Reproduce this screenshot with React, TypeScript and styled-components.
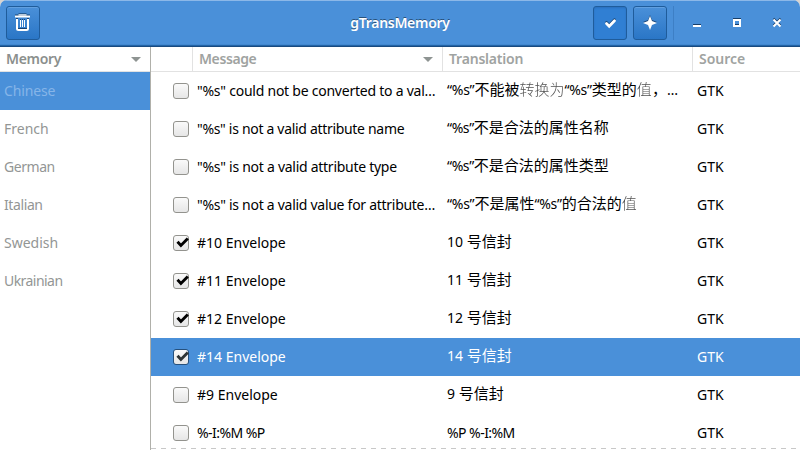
import React from "react";
import styled, { createGlobalStyle, css } from "styled-components";

const Global = createGlobalStyle`
  * { box-sizing: border-box; }
  body { margin: 0; background: #d8d4d0; overflow: hidden; }
`;

const Window = styled.div`
  width: 800px;
  height: 450px;
  display: flex;
  flex-direction: column;
  overflow: hidden;
  background: #fff;
  border-radius: 7px 7px 0 0;
  font: 14px/20px "Noto Sans", "Noto Sans CJK SC", sans-serif;
  color: #000;
`;

const HeaderBar = styled.header`
  height: 47px;
  flex: none;
  display: grid;
  grid-template-columns: 1fr auto 1fr;
  align-items: start;
  padding: 5px 6px 0;
  background: #4a90d9;
  border-top: 1px solid #8cb8e8;
  border-bottom: 1px solid #184a80;
  box-shadow: inset 0 -1px #2363a5, inset 0 -2px #4288d0;
`;

const Title = styled.h1`
  margin: 0;
  font-size: 14px;
  line-height: 34px;
  font-weight: 600;
  color: #fff;
  text-shadow: 0 -1px rgba(0, 0, 0, 0.45);
`;

const Controls = styled.div`
  display: flex;
  justify-content: flex-end;
  align-items: center;
  margin-right: 9px;
`;

const ToolButton = styled.button<{ $pressed?: boolean }>`
  width: 34px;
  height: 34px;
  padding: 0;
  display: grid;
  place-items: center;
  border: 1px solid #1f5c9b;
  border-radius: 3px;
  background: ${(p) => (p.$pressed ? "#307fd3" : "linear-gradient(#4a90d9, #2a76c6)")};
  box-shadow: ${(p) => (p.$pressed ? "inset 0 1px 2px #2a70bd" : "inset 0 1px #62a0e0")};
  & + & { margin-left: 6px; }
  svg { filter: drop-shadow(0 -1px 0 rgba(10, 40, 75, 0.7)); }
`;

const Divider = styled.div`
  width: 1px;
  height: 34px;
  margin: 0 15px 0 6px;
  background: #3d7fc5;
`;

const WindowButton = styled.button`
  width: 16px;
  height: 16px;
  padding: 0;
  border: 0;
  background: none;
  display: grid;
  & + & { margin-left: 24px; }
  svg { filter: drop-shadow(0 -1px 0 rgba(10, 40, 75, 0.8)); }
`;

const Body = styled.main`
  flex: 1;
  display: grid;
  grid-template-columns: 151px 1fr;
  min-height: 0;
`;

const Sidebar = styled.aside`
  border-right: 1px solid #b0b0aa;
`;

const HeadCell = styled.div<{ $dark?: boolean }>`
  height: 25px;
  display: flex;
  align-items: center;
  justify-content: space-between;
  padding: 0 9px 0 6px;
  font-weight: 600;
  color: ${(p) => (p.$dark ? "#8b8f8d" : "#9fa3a1")};
  border-bottom: 1px solid #e2e2e2;
  & + & { border-left: 1px solid #e2e2e2; }
`;

const Language = styled.div<{ $selected?: boolean }>`
  height: 38px;
  padding: 0 4px;
  line-height: 38px;
  color: ${(p) => (p.$selected ? "#86b5e8" : "#939695")};
  background: ${(p) => (p.$selected ? "#4a90d9" : "none")};
`;

const columns = css`
  display: grid;
  grid-template-columns: 41px 250px 250px 108px;
`;

const Table = styled.section`
  position: relative;
  overflow: hidden;
`;

const TableHead = styled.div`
  ${columns}
`;

const Row = styled.div<{ $selected?: boolean }>`
  ${columns}
  height: 38px;
  align-items: center;
  color: ${(p) => (p.$selected ? "#fff" : "#000")};
  background: ${(p) => (p.$selected ? "#4a90d9" : "#fff")};
`;

const Cell = styled.div<{ $raise?: boolean }>`
  padding-left: 5px;
  height: 38px;
  line-height: ${(p) => (p.$raise ? 36 : 38)}px;
  white-space: pre;
`;

const Han = styled.span<{ $thin?: boolean }>`
  font-family: "Noto Sans CJK SC", sans-serif;
  font-size: 15px;
  line-height: 1;
  letter-spacing: 0;
  font-weight: ${(p) => (p.$thin ? 300 : 400)};
  opacity: ${(p) => (p.$thin ? 0.7 : 1)};
`;

const Text = styled.span<{ $spacing: number }>`
  letter-spacing: ${(p) => p.$spacing}px;
`;

const CheckBox = styled.div<{ $selected?: boolean }>`
  width: 16px;
  height: 16px;
  margin-left: 22px;
  border: 1px solid ${(p) => (p.$selected ? "#26507c" : "#93938e")};
  border-radius: 3px;
  background: linear-gradient(#fafafa, #e6e6e6);
  svg { display: block; overflow: visible; }
`;

const Undershoot = styled.div`
  position: absolute;
  left: 0;
  right: 0;
  bottom: 1px;
  height: 1px;
  background: repeating-linear-gradient(90deg, #c8c8c8 0 5px, #fff 5px 10px);
`;

const Arrow = () => (
  <svg width="10" height="5" viewBox="0 0 10 5"><path d="M0 0h10L5 5z" fill="#8e9492" /></svg>
);

const Tick = ({ color }: { color: string }) => (
  <svg width="14" height="14" viewBox="0 0 14 14">
    <path d="M3.5 5.8l3.4 3.7L13.8 2.4" fill="none" stroke={color} strokeWidth="2.9" />
  </svg>
);

// Han runs are set one pixel larger than Latin text; braces mark runs drawn in the light weight.
const Mixed = ({ text }: { text: string }) => (
  <>
    {text.split(/(\{[^}]+\}|[\u4e00-\u9fff，]+)/).map((run, i) => {
      if (run.startsWith("{")) return <Han key={i} $thin>{run.slice(1, -1)}</Han>;
      return i % 2 ? <Han key={i}>{run}</Han> : run;
    })}
  </>
);

const languages: [string, number][] = [
  ["Chinese", -0.15], ["French", 0], ["German", -0.45], ["Italian", -0.4], ["Swedish", 0], ["Ukrainian", -0.55],
];

type Entry = { message: string; translation: string; checked?: boolean; selected?: boolean; ms: number; ts: number; latin?: boolean };

const entries: Entry[] = [
  { message: "\"%s\" could not be converted to a val…", translation: "“%s”不能被{转换为}“%s”类型的{值}，…", ms: -0.24, ts: -0.25 },
  { message: "\"%s\" is not a valid attribute name", translation: "“%s”不是合法的属性名称", ms: -0.31, ts: -0.4 },
  { message: "\"%s\" is not a valid attribute type", translation: "“%s”不是合法的属性类型", ms: -0.27, ts: -0.4 },
  { message: "\"%s\" is not a valid value for attribute…", translation: "“%s”不是属性“%s”的合法的{值}", ms: -0.28, ts: -0.25 },
  { message: "#10 Envelope", translation: "10 号信封", checked: true, ms: 0, ts: 0 },
  { message: "#11 Envelope", translation: "11 号信封", checked: true, ms: 0, ts: 0 },
  { message: "#12 Envelope", translation: "12 号信封", checked: true, ms: 0, ts: 0 },
  { message: "#14 Envelope", translation: "14 号信封", checked: true, selected: true, ms: 0, ts: 0 },
  { message: "#9 Envelope", translation: "9 号信封", ms: 0, ts: 0 },
  { message: "%-I:%M %P", translation: "%P %-I:%M", latin: true, ms: -0.55, ts: -0.55 },
];

export default function App() {
  return (
    <>
      <Global />
      <Window>
        <HeaderBar>
          <ToolButton aria-label="Delete">
            <svg width="16" height="18" viewBox="0 0 16 18" fill="none" stroke="#fff">
              <path d="M3.5 .9h8" strokeWidth="1.2" />
              <path d="M0 2.5h15" strokeWidth="2" />
              <path d="M2 5v9.5q0 1.5 1.5 1.5h8q1.5 0 1.5-1.5V5" strokeWidth="2" />
              <path d="M5.5 6v7M7.5 6v7M9.5 6v7" />
            </svg>
          </ToolButton>
          <Title><Text $spacing={-0.3}>gTransMemory</Text></Title>
          <Controls>
            <ToolButton $pressed aria-label="Approve">
              <svg width="16" height="16" viewBox="0 0 16 16">
                <path d="M4.5 8.5l2.7 2.7L12.5 5.8" fill="none" stroke="#fff" strokeWidth="2.8" strokeLinecap="round" />
              </svg>
            </ToolButton>
            <ToolButton aria-label="New">
              <svg width="16" height="16" viewBox="0 0 16 16"><path d="M8 1l2 5 5 2-5 2-2 5-2-5-5-2 5-2z" fill="#fff" /></svg>
            </ToolButton>
            <Divider />
            <WindowButton aria-label="Minimize"><svg width="16" height="16"><path d="M4 10h8v2H4z" fill="#fff" /></svg></WindowButton>
            <WindowButton aria-label="Maximize"><svg width="16" height="16"><path d="M5 5h6v6H5z" fill="none" stroke="#fff" strokeWidth="2" /></svg></WindowButton>
            <WindowButton aria-label="Close"><svg width="16" height="16"><path d="M4.5 4.5l7 7m0-7l-7 7" stroke="#fff" strokeWidth="2" /></svg></WindowButton>
          </Controls>
        </HeaderBar>
        <Body>
          <Sidebar>
            <HeadCell $dark><Text $spacing={-0.3}>Memory</Text><Arrow /></HeadCell>
            {languages.map(([name, spacing], i) => (
              <Language key={name} $selected={i === 0}><Text $spacing={spacing}>{name}</Text></Language>
            ))}
          </Sidebar>
          <Table>
            <TableHead>
              <HeadCell />
              <HeadCell><Text $spacing={-0.4}>Message</Text><Arrow /></HeadCell>
              <HeadCell><Text $spacing={-0.2}>Translation</Text></HeadCell>
              <HeadCell>Source</HeadCell>
            </TableHead>
            {entries.map((e) => (
              <Row key={e.message} $selected={e.selected}>
                <CheckBox $selected={e.selected}>{e.checked && <Tick color={e.selected ? "#2e3436" : "#000"} />}</CheckBox>
                <Cell><Text $spacing={e.ms}>{e.message}</Text></Cell>
                <Cell $raise={!e.latin}><Text $spacing={e.ts}><Mixed text={e.translation} /></Text></Cell>
                <Cell>GTK</Cell>
              </Row>
            ))}
            <Undershoot />
          </Table>
        </Body>
      </Window>
    </>
  );
}
